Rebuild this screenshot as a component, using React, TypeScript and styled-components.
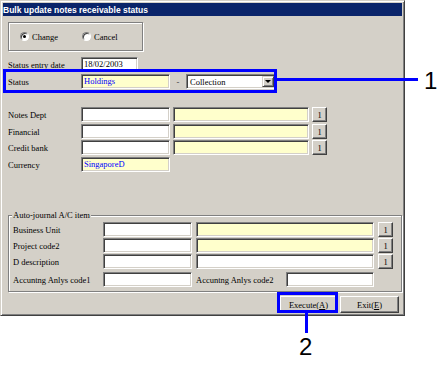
import React from "react";
import styled, { createGlobalStyle } from "styled-components";

const Global = createGlobalStyle`
  html, body { margin: 0; padding: 0; background: #ffffff; }
  body { font-family: "Liberation Serif", "Times New Roman", serif; }
  * { box-sizing: border-box; }
`;

const Stage = styled.div`
  position: relative;
  width: 448px;
  height: 366px;
  overflow: hidden;
  background: #ffffff;
`;

const Window = styled.div`
  width: 405px;
  height: 316px;
  background: #d4d0c8;
  border: 1px solid;
  border-color: #d4d0c8 #404040 #404040 #d4d0c8;
  box-shadow: inset 1px 1px #ffffff, inset -1px -1px #808080;
  padding: 2px;
  display: flex;
  flex-direction: column;
`;

const TitleBar = styled.div`
  height: 13px;
  background: #0a246a;
  color: #ffffff;
  font: bold 8.5px "Liberation Sans", Arial, sans-serif;
  display: flex;
  align-items: center;
  padding-left: 0;
  white-space: nowrap;
`;

const Body = styled.div`
  flex: 1;
  display: flex;
  flex-direction: column;
  padding: 6px 0 0 5px;
  font-size: 8.5px;
  color: #000;
`;

const RadioGroup = styled.div`
  width: 135px;
  height: 29px;
  border: 1px solid #808080;
  box-shadow: inset 1px 1px #ffffff, 1px 1px #ffffff;
  display: flex;
  align-items: center;
  padding-left: 11px;
`;

const RadioOption = styled.label<{ $w: number }>`
  width: ${(p) => p.$w}px;
  display: flex;
  align-items: center;
  gap: 3px;
  font-size: 8.5px;
`;

const RadioCircle = styled.span<{ $on?: boolean }>`
  width: 9px;
  height: 9px;
  border-radius: 50%;
  background: #ffffff;
  border: 1px solid;
  border-color: #808080 #ffffff #ffffff #808080;
  box-shadow: inset 1px 1px #404040;
  display: flex;
  align-items: center;
  justify-content: center;
  &::after {
    content: "";
    width: 3px;
    height: 3px;
    border-radius: 50%;
    background: ${(p) => (p.$on ? "#000" : "transparent")};
  }
`;

const Row = styled.div<{ $mt: number }>`
  display: flex;
  align-items: center;
  height: 15px;
  margin-top: ${(p) => p.$mt}px;
`;

const Label = styled.span<{ $w: number }>`
  width: ${(p) => p.$w}px;
  flex: none;
  font-size: 8.5px;
  white-space: nowrap;
`;

const Field = styled.div<{ $w: number; $yellow?: boolean; $blue?: boolean; $ml?: number }>`
  width: ${(p) => p.$w}px;
  height: 15px;
  flex: none;
  margin-left: ${(p) => p.$ml ?? 0}px;
  background: ${(p) => (p.$yellow ? "#ffffcc" : "#ffffff")};
  color: ${(p) => (p.$blue ? "#0000ff" : "#000000")};
  border: 1px solid;
  border-color: #808080 #ffffff #ffffff #808080;
  box-shadow: inset 1px 1px #404040, inset -1px -1px #d4d0c8;
  font-size: 8.5px;
  line-height: 13px;
  padding-left: 2px;
  white-space: nowrap;
  overflow: hidden;
`;

const Dash = styled.span`
  width: 16px;
  flex: none;
  text-align: center;
  font-size: 8.5px;
  color: #404040;
`;

const Select = styled.div`
  width: 90px;
  height: 15px;
  flex: none;
  display: flex;
  align-items: center;
  background: #ffffff;
  border: 1px solid;
  border-color: #808080 #ffffff #ffffff #808080;
  box-shadow: inset 1px 1px #404040, inset -1px -1px #d4d0c8;
  padding: 1px 1px 1px 3px;
  font-size: 8.5px;
`;

const SelectText = styled.span`
  flex: 1;
  white-space: nowrap;
`;

const ArrowButton = styled.span`
  width: 12px;
  height: 11px;
  background: #d4d0c8;
  border: 1px solid;
  border-color: #d4d0c8 #404040 #404040 #d4d0c8;
  box-shadow: inset 1px 1px #ffffff, inset -1px -1px #808080;
  display: flex;
  align-items: center;
  justify-content: center;
  &::after {
    content: "";
    border-left: 3px solid transparent;
    border-right: 3px solid transparent;
    border-top: 3px solid #000;
  }
`;

const SmallButton = styled.button<{ $ml: number }>`
  width: 15px;
  height: 15px;
  flex: none;
  margin-left: ${(p) => p.$ml}px;
  padding: 0;
  background: #d4d0c8;
  border: 1px solid;
  border-color: #ffffff #404040 #404040 #ffffff;
  box-shadow: inset -1px -1px #808080;
  font: 8.5px "Liberation Serif", "Times New Roman", serif;
  color: #000;
  display: flex;
  align-items: center;
  justify-content: center;
`;

const GroupBox = styled.div`
  position: relative;
  margin-top: 43px;
  height: 77px;
  border: 1px solid #808080;
  box-shadow: inset 1px 1px #ffffff, 1px 1px #ffffff;
  padding: 6px 0 0 4px;
`;

const Legend = styled.span`
  position: absolute;
  top: -6px;
  left: 3px;
  padding: 0 1px;
  background: #d4d0c8;
  font-size: 8.5px;
  line-height: 10px;
  white-space: nowrap;
`;

const ButtonBar = styled.div`
  display: flex;
  justify-content: flex-end;
  gap: 3px;
  margin-top: 4px;
  padding-right: 3px;
`;

const PushButton = styled.button<{ $w: number }>`
  width: ${(p) => p.$w}px;
  height: 17px;
  padding: 0;
  background: #d4d0c8;
  border: 1px solid;
  border-color: #ffffff #404040 #404040 #ffffff;
  box-shadow: inset -1px -1px #808080;
  font: 8.5px "Liberation Serif", "Times New Roman", serif;
  color: #000;
`;

const CalloutBox = styled.div<{ $x: number; $y: number; $w: number; $h: number }>`
  position: absolute;
  left: ${(p) => p.$x}px;
  top: ${(p) => p.$y}px;
  width: ${(p) => p.$w}px;
  height: ${(p) => p.$h}px;
  border: 3px solid #0000ff;
`;

const CalloutLine = styled.div<{ $x: number; $y: number; $w: number; $h: number }>`
  position: absolute;
  left: ${(p) => p.$x}px;
  top: ${(p) => p.$y}px;
  width: ${(p) => p.$w}px;
  height: ${(p) => p.$h}px;
  background: #0000ff;
`;

const CalloutNum = styled.span<{ $x: number; $y: number }>`
  position: absolute;
  left: ${(p) => p.$x}px;
  top: ${(p) => p.$y}px;
  font: 24px/1 "Liberation Sans", Arial, sans-serif;
  color: #000;
`;

const LinkedRow = ({ label, mt, secondYellow = true }: { label: string; mt: number; secondYellow?: boolean }) => (
  <Row $mt={mt}>
    <Label $w={73}>{label}</Label>
    <Field $w={89} />
    <Field $w={136} $ml={3} $yellow={secondYellow} />
    <SmallButton $ml={3}>1</SmallButton>
  </Row>
);

const JournalRow = ({ label, mt, secondYellow }: { label: string; mt: number; secondYellow: boolean }) => (
  <Row $mt={mt}>
    <Label $w={90}>{label}</Label>
    <Field $w={89} />
    <Field $w={178} $ml={4} $yellow={secondYellow} />
    <SmallButton $ml={4}>1</SmallButton>
  </Row>
);

export default function App() {
  return (
    <Stage>
      <Global />
      <Window>
        <TitleBar>Bulk update notes receivable status</TitleBar>
        <Body>
          <RadioGroup>
            <RadioOption $w={62}>
              <RadioCircle $on />
              Change
            </RadioOption>
            <RadioOption $w={60}>
              <RadioCircle />
              Cancel
            </RadioOption>
          </RadioGroup>

          <Row $mt={6}>
            <Label $w={73}>Status entry date</Label>
            <Field $w={57}>18/02/2003</Field>
          </Row>
          <Row $mt={2}>
            <Label $w={73}>Status</Label>
            <Field $w={89} $yellow $blue>
              Holdings
            </Field>
            <Dash>-</Dash>
            <Select>
              <SelectText>Collection</SelectText>
              <ArrowButton />
            </Select>
          </Row>

          <LinkedRow label="Notes Dept" mt={18} />
          <LinkedRow label="Financial" mt={2} />
          <LinkedRow label="Credit bank" mt={1} />
          <Row $mt={2}>
            <Label $w={73}>Currency</Label>
            <Field $w={89} $yellow $blue>
              SingaporeD
            </Field>
          </Row>

          <GroupBox>
            <Legend>Auto-journal A/C item</Legend>
            <JournalRow label="Business Unit" mt={0} secondYellow />
            <JournalRow label="Project code2" mt={1} secondYellow />
            <JournalRow label="D description" mt={1} secondYellow={false} />
            <Row $mt={3}>
              <Label $w={90}>Accuntng Anlys code1</Label>
              <Field $w={89} />
              <Label $w={90} style={{ marginLeft: 4 }}>
                Accuntng Anlys code2
              </Label>
              <Field $w={88} />
            </Row>
          </GroupBox>

          <ButtonBar>
            <PushButton $w={57}>
              Execute(<u>A</u>)
            </PushButton>
            <PushButton $w={59}>
              Exit(<u>E</u>)
            </PushButton>
          </ButtonBar>
        </Body>
      </Window>

      <CalloutBox $x={3} $y={69} $w={274} $h={24} />
      <CalloutLine $x={277} $y={78} $w={141} $h={3} />
      <CalloutNum $x={424} $y={69}>1</CalloutNum>

      <CalloutBox $x={277} $y={292} $w={61} $h={21} />
      <CalloutLine $x={305} $y={313} $w={3} $h={20} />
      <CalloutNum $x={299} $y={335}>2</CalloutNum>
    </Stage>
  );
}
